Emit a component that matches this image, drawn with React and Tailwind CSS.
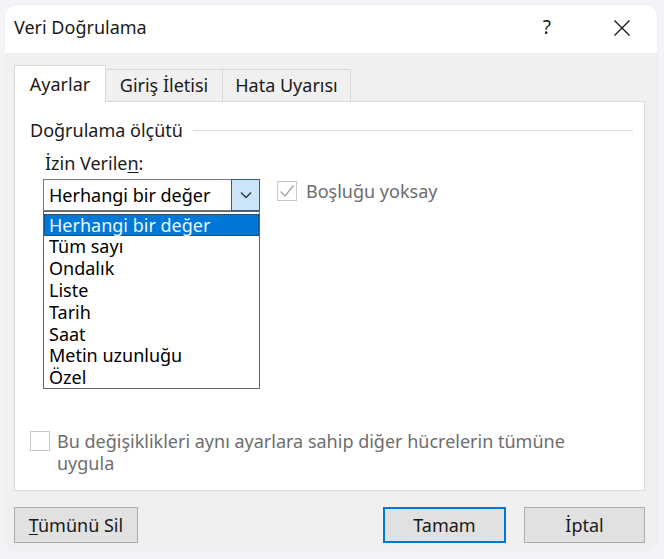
import React from "react";

const font = { fontFamily: '"Noto Sans", "Open Sans", sans-serif' };

function Chevron() {
  return (
    <svg width="12" height="8" viewBox="0 0 12 8" fill="none">
      <path d="M1 1.5 L6 6.5 L11 1.5" stroke="#333" strokeWidth="1.3" />
    </svg>
  );
}

export default function App() {
  const items = ["Tüm sayı", "Ondalık", "Liste", "Tarih", "Saat", "Metin uzunluğu", "Özel"];
  return (
    <div className="w-[664px] h-[559px] bg-[#f3f4f7] pt-[5px] pl-[5px] pr-[7px] pb-[9px]" style={font}>
      <div className="w-full h-full rounded-[12px] overflow-hidden flex flex-col bg-[#f0f0f0] shadow-[0_0_2px_rgba(0,0,0,0.08)]">
        {/* Title bar */}
        <div className="h-[48px] bg-white flex items-center pl-[9px] pr-[26px] pb-[3px] shrink-0">
          <span className="text-[18px] text-[#1a1a1a] flex-1">Veri Doğrulama</span>
          <span className="text-[19px] text-[#1a1a1a] mr-[62px]">?</span>
          <svg width="18" height="18" viewBox="0 0 18 18" fill="none">
            <path d="M1.5 1.5 L16.5 16.5 M16.5 1.5 L1.5 16.5" stroke="#1a1a1a" strokeWidth="1.4" />
          </svg>
        </div>
        {/* Body */}
        <div className="flex-1 flex flex-col px-[9px] pt-[12px]">
          {/* Tabs */}
          <div className="flex items-end h-[36px] relative z-10">
            <div className="h-[37px] w-[92px] bg-white border border-[#d9d9d9] border-b-0 flex items-center justify-center text-[18px] text-[#1a1a1a] -mb-[1px]">
              Ayarlar
            </div>
            <div className="h-[32px] w-[117px] bg-[#f0f0f0] border border-[#d9d9d9] border-l-0 border-b-0 flex items-center justify-center text-[18px] text-[#1a1a1a]">
              Giriş İletisi
            </div>
            <div className="h-[32px] w-[128px] bg-[#f0f0f0] border border-[#d9d9d9] border-l-0 border-b-0 flex items-center justify-center text-[18px] text-[#1a1a1a]">
              Hata Uyarısı
            </div>
          </div>
          {/* Panel */}
          <div className="h-[390px] w-[631px] bg-white border border-[#d9d9d9] flex flex-col pl-[15px] pr-[11px] pt-[16px] pb-[16px]">
            <div className="flex items-center h-[24px]">
              <span className="text-[18px] text-[#1a1a1a]">Doğrulama ölçütü</span>
              <div className="flex-1 h-px bg-[#dcdcdc] ml-[10px]"></div>
            </div>
            <div className="pl-[13px] mt-[10px]">
              <div className="text-[18px] text-[#1a1a1a] h-[22px] leading-[22px] pl-[2px]">
                İzin Verile<span className="underline underline-offset-2">n</span>:
              </div>
              <div className="flex items-start mt-[5px]">
                <div className="relative">
                  <div className="w-[217px] h-[32px] border border-[#7a7a7a] bg-white flex items-stretch">
                    <div className="flex-1 flex items-center pl-[5px] text-[18px] text-[#000] whitespace-nowrap">Herhangi bir değer</div>
                    <div className="w-[29px] bg-[#cce4f7] border border-[#2f5f8f] flex items-center justify-center -my-[1px] -mr-[1px]">
                      <Chevron />
                    </div>
                  </div>
                  <div className="absolute left-0 top-[32px] w-[217px] h-[178px] bg-white border border-[#646464] z-20 flex flex-col pt-[2px] overflow-hidden">
                    <div className="h-[22px] shrink-0 bg-[#0078d7] border border-dotted border-[#1c3552] flex items-center pl-[4px] text-[18px] text-[#eef6ff] whitespace-nowrap">
                      Herhangi bir değer
                    </div>
                    {items.map((t) => (
                      <div key={t} className="h-[21.8px] shrink-0 flex items-center pl-[5px] text-[18px] text-[#000] whitespace-nowrap">
                        {t}
                      </div>
                    ))}
                  </div>
                </div>
                <div className="flex items-center ml-[17px] h-[22px] mt-[1px]">
                  <div className="w-[20px] h-[20px] border border-[#c6c6c6] bg-white flex items-center justify-center">
                    <svg width="16" height="14" viewBox="0 0 16 14" fill="none">
                      <path d="M1.5 7.5 L6 12 L14.5 1.5" stroke="#a8a8a8" strokeWidth="1.4" />
                    </svg>
                  </div>
                  <span className="ml-[9px] text-[18px] text-[#6d6d6d]">Boşluğu yoksay</span>
                </div>
              </div>
            </div>
            <div className="flex-1"></div>
            <div className="flex items-start">
              <div className="w-[20px] h-[20px] border border-[#c6c6c6] bg-white mt-[1px] shrink-0"></div>
              <div className="ml-[7px] text-[18px] leading-[22px] text-[#6d6d6d] w-[535px]">
                Bu değişiklikleri aynı ayarlara sahip diğer hücrelerin tümüne uygula
              </div>
            </div>
          </div>
          {/* Buttons */}
          <div className="flex items-center mt-[16px] pr-[3px]">
            <div className="w-[124px] h-[36px] bg-[#e1e1e1] border border-[#adadad] flex items-center justify-center text-[18px] text-[#1a1a1a]">
              <span><span className="underline underline-offset-2">T</span>ümünü Sil</span>
            </div>
            <div className="flex-1"></div>
            <div className="w-[123px] h-[36px] bg-[#e1e1e1] border-2 border-[#0078d7] flex items-center justify-center text-[18px] text-[#1a1a1a]">
              Tamam
            </div>
            <div className="w-[121px] h-[36px] bg-[#e1e1e1] border border-[#adadad] flex items-center justify-center text-[18px] text-[#1a1a1a] ml-[18px]">
              İptal
            </div>
          </div>
        </div>
      </div>
    </div>
  );
}
